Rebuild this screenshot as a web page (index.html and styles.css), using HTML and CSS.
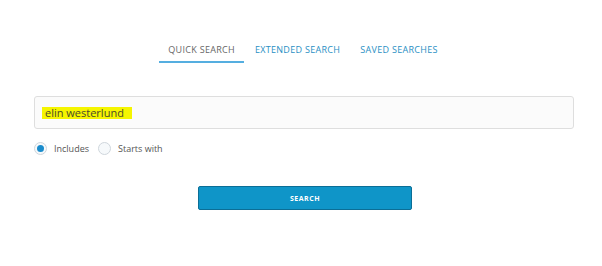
FILE: index.html
```html
<!DOCTYPE html>
<html>
<head>
<meta charset="utf-8">
<link rel="stylesheet" href="styles.css">
</head>
<body>
<div class="page">
  <nav class="tabs">
    <a class="tab active">QUICK SEARCH</a>
    <a class="tab">EXTENDED SEARCH</a>
    <a class="tab">SAVED SEARCHES</a>
  </nav>
  <div class="field">
    <span class="value">elin westerlund</span>
  </div>
  <div class="options">
    <label class="opt"><span class="radio checked"></span>Includes</label>
    <label class="opt"><span class="radio"></span>Starts with</label>
  </div>
  <div class="actions">
    <button class="btn">SEARCH</button>
  </div>
</div>
</body>
</html>
```
FILE: styles.css
```css
html, body { margin: 0; padding: 0; background: #fff; }
body { font-family: "Open Sans", "Liberation Sans", sans-serif; }
.page { width: 602px; height: 266px; box-sizing: border-box; padding: 41px 28px 0 34px; }
.tabs { display: flex; justify-content: center; margin-left: -1px; }
.tab { font-size: 9px; color: #2a8fc4; padding: 2px 10px 5px; border-bottom: 2px solid transparent; letter-spacing: 0.3px; }
.tab.active { color: #666; border-bottom-color: #55aee0; padding: 2px 9px 5px; margin-right: 1px; }
.field { margin-top: 33px; height: 31px; border: 1px solid #dedede; border-radius: 3px; background: #fbfbfb; display: flex; align-items: center; padding-left: 7px; }
.value { background: #f5f500; color: #4a4a2a; font-size: 11px; line-height: 12px; padding: 0 8px 0 3px; }
.options { display: flex; align-items: center; margin-top: 13px; font-size: 9px; color: #555; }
.opt { display: flex; align-items: center; margin-right: 9px; }
.radio { width: 11px; height: 11px; border: 1px solid #cfd6dc; border-radius: 50%; background: #f6f9fb; margin-right: 7px; box-sizing: content-box; position: relative; }
.radio.checked::after { content: ""; position: absolute; left: 2px; top: 2px; width: 7px; height: 7px; border-radius: 50%; background: #1a8ccc; }
.actions { display: flex; justify-content: center; margin-top: 31px; padding-left: 2px; }
.btn { width: 214px; height: 24px; background: #0f95c8; border: 1px solid #0b6e96; border-radius: 2px; color: #fff; font-family: "Open Sans", sans-serif; font-size: 7px; font-weight: 700; letter-spacing: 0.5px; }
```
